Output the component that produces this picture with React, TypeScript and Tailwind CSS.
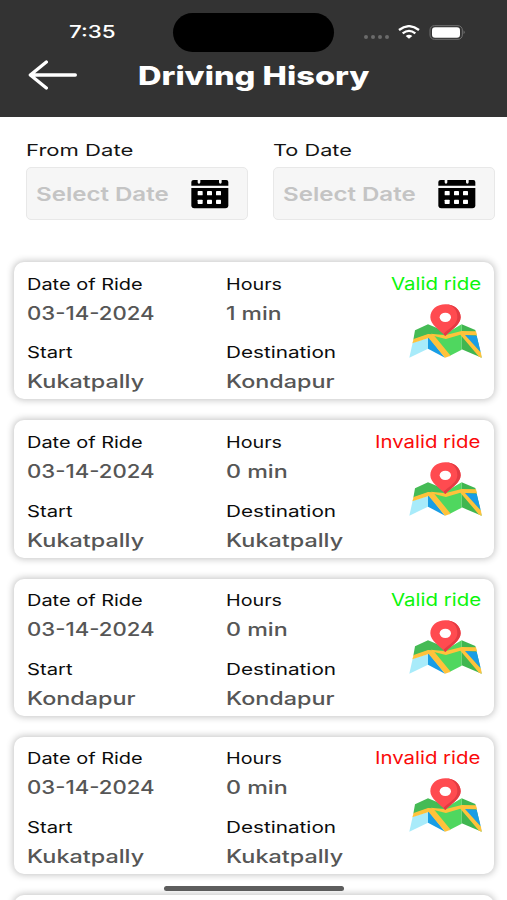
import { useLayoutEffect, useRef, useState } from "react";

type FitProps = { text: string; width: number; className?: string };

/** One line of wide lettering, stretched horizontally to the given width. */
function Fit({ text, width, className = "" }: FitProps) {
  const ref = useRef<HTMLSpanElement>(null);
  const [scale, setScale] = useState(1);
  useLayoutEffect(() => {
    if (ref.current) setScale(width / ref.current.offsetWidth);
  }, [text, width]);
  return (
    <div className={className} style={{ width }}>
      <span
        ref={ref}
        className="inline-block origin-left whitespace-nowrap"
        style={{ transform: `scaleX(${scale})` }}
      >
        {text}
      </span>
    </div>
  );
}

const widths: Record<string, number> = {
  "03-14-2024": 128,
  "1 min": 56,
  "0 min": 62,
  Kukatpally: 117,
  Kondapur: 109,
};

function CalendarIcon() {
  return (
    <svg className="h-[30px] w-[38px]" viewBox="0 0 114 90" preserveAspectRatio="none">
      <path d="M1 20V9Q1 3 8 3H20V10Q20 14 24 14T28 10V3H84V10Q84 14 88 14T92 10V3H106Q112 3 112 9V20Z" />
      <path d="M1 27H112V79Q112 88 103 88H10Q1 88 1 79Z" />
      <g fill="#fff">
        <rect x="20" y="36" width="15" height="13" rx="2" />
        <rect x="48" y="36" width="15" height="13" rx="2" />
        <rect x="75" y="36" width="15" height="13" rx="2" />
        <rect x="20" y="62" width="15" height="13" rx="2" />
        <rect x="48" y="62" width="15" height="13" rx="2" />
        <rect x="75" y="62" width="15" height="13" rx="2" />
      </g>
    </svg>
  );
}

function MapIcon() {
  return (
    <svg className="h-[54px] w-[73px]" viewBox="26 26 219 162" preserveAspectRatio="none">
      <path d="M44 105L83 87L134 108V125L83 118L39 133Z" fill="#45bb55" />
      <path d="M37 142L83 128V160L27 187Z" fill="#a8ebfa" />
      <path d="M83 122L134 187L83 160Z" fill="#199de5" />
      <path d="M95 118L134 116L184 87V163L146 183Z" fill="#4fd75f" />
      <path d="M184 87L225 104L244 187L184 162Z" fill="#40b650" />
      <path d="M190 118L229 121L241 170Z" fill="#199de5" />
      <path d="M40 131L83 116L98 117L151 181L134 187L85 128L36 144Z" fill="#ffc23b" />
      <path d="M92 115L134 120L184 107L227 108L230 120L194 119L242 172L244 187L236 184L180 118L137 131L98 121Z" fill="#ffc23b" />
      <path d="M135 27C110 27 90 43 90 66C90 88 119 105 135 122C151 105 181 88 181 66C181 43 160 27 135 27Z" fill="#ff4b50" />
      <path d="M135 27C160 27 181 43 181 66C181 88 151 105 135 122L129 116C148 98 171 88 171 66C171 43 158 29 135 27Z" fill="#e43b43" />
      <ellipse cx="135" cy="66" rx="17" ry="14" fill="#fff" />
    </svg>
  );
}

function DateField({ label, labelWidth }: { label: string; labelWidth: number }) {
  return (
    <div className="w-[222px]">
      <Fit text={label} width={labelWidth} className="h-6 text-[16.5px] leading-6 text-[#141414]" />
      <div className="mt-[5px] flex h-[53px] items-center justify-between rounded-[5px] border border-[#e8e8e8] bg-[#f6f6f6] pr-[18.5px] pl-[9px]">
        <Fit
          text="Select Date"
          width={133}
          className="mt-[2px] h-7 text-[19px] leading-7 font-semibold text-[#c4c4c4]"
        />
        <CalendarIcon />
      </div>
    </div>
  );
}

function Entry({ label, labelWidth, value }: { label: string; labelWidth: number; value: string }) {
  return (
    <div>
      <Fit text={label} width={labelWidth} className="h-6 text-[16px] leading-6 text-[#0c0c0c]" />
      <Fit
        text={value}
        width={widths[value]}
        className="mt-[4px] h-7 text-[18px] leading-7 font-medium text-[#565656]"
      />
    </div>
  );
}

type Ride = { hours: string; start: string; destination: string; valid: boolean };

const cardShape = "shrink-0 rounded-[10px] bg-white shadow-[0_0_7px_1px_rgba(0,0,0,0.24)]";

function RideCard({ hours, start, destination, valid }: Ride) {
  return (
    <article className={`${cardShape} flex h-[137.33px] pt-[9.5px] pr-[13px] pl-[13px]`}>
      <div className="flex w-[199.5px] flex-col gap-[12.7px]">
        <Entry label="Date of Ride" labelWidth={116} value="03-14-2024" />
        <Entry label="Start" labelWidth={45.5} value={start} />
      </div>
      <div className="flex flex-col gap-[12.7px]">
        <Entry label="Hours" labelWidth={55.5} value={hours} />
        <Entry label="Destination" labelWidth={110} value={destination} />
      </div>
      <div className="ml-auto flex w-0 flex-col items-end">
        <Fit
          text={valid ? "Valid ride" : "Invalid ride"}
          width={valid ? 90 : 106}
          className={
            valid
              ? "h-6 text-[17.5px] leading-6 text-[#0bf50b]"
              : "h-6 text-[17.5px] leading-6 text-[#fa0a0a]"
          }
        />
        <div className="mt-[8px] -mr-[0.7px]">
          <MapIcon />
        </div>
      </div>
    </article>
  );
}

const rides: Ride[] = [
  { hours: "1 min", start: "Kukatpally", destination: "Kondapur", valid: true },
  { hours: "0 min", start: "Kukatpally", destination: "Kukatpally", valid: false },
  { hours: "0 min", start: "Kondapur", destination: "Kondapur", valid: true },
  { hours: "0 min", start: "Kukatpally", destination: "Kukatpally", valid: false },
];

export default function App() {
  return (
    <div className="relative h-[900px] w-[507px] overflow-hidden bg-white font-['Inter','Liberation_Sans',sans-serif]">
      <header className="h-[117px] bg-[#333333]">
        <div className="flex h-[52px] items-end pl-[68.5px]">
          <Fit text="7:35" width={46} className="mb-[8px] h-6 text-[17px] leading-6 font-medium text-white" />
          <div className="ml-[58.5px] h-[39px] w-[161px] rounded-full bg-black" />
          <div className="mb-[12px] ml-[30px] flex h-[16px] items-center">
            <div className="mt-[9px] flex gap-[3px]">
              <i className="size-[4px] rounded-full bg-[#6b6b6b]" />
              <i className="size-[4px] rounded-full bg-[#6b6b6b]" />
              <i className="size-[4px] rounded-full bg-[#6b6b6b]" />
              <i className="size-[4px] rounded-full bg-[#6b6b6b]" />
            </div>
            <svg className="ml-[9px] h-[14px] w-[22px]" viewBox="0 0 66 42" fill="none" stroke="#fff" strokeWidth="7">
              <path d="M3 15Q33 -8 63 15" />
              <path d="M14 25Q33 10 52 25" />
              <path d="M23 33Q33 25 43 33L33 41Z" fill="#fff" stroke="none" />
            </svg>
            <svg className="ml-[9px] h-[15px] w-[36px]" viewBox="0 0 108 45">
              <rect x="3" y="2" width="97" height="41" rx="13" fill="none" stroke="#707070" strokeWidth="3" />
              <rect x="9" y="7" width="84" height="31" rx="9" fill="#fff" />
              <path d="M104 16Q109 22 104 28Z" fill="#888" />
            </svg>
          </div>
        </div>
        <div className="flex h-[46px] items-center pl-[28px]">
          <svg
            className="h-[30px] w-[49px]"
            viewBox="0 0 147 90"
            fill="none"
            stroke="#fff"
            strokeWidth="10"
            strokeLinecap="round"
            strokeLinejoin="round"
          >
            <path d="M55 6L7 45L55 84M7 45H142" />
          </svg>
          <Fit text="Driving Hisory" width={232} className="mt-[2px] ml-[60.5px] h-9 text-[26px] leading-9 font-extrabold text-white" />
        </div>
      </header>

      <section className="flex gap-[25px] pt-[21px] pl-[26px]">
        <DateField label="From Date" labelWidth={107} />
        <DateField label="To Date" labelWidth={79} />
      </section>

      <main className="mt-[42px] flex flex-col gap-[21px] pr-[13px] pl-[13.5px]">
        {rides.map((ride, i) => (
          <RideCard key={i} {...ride} />
        ))}
        <article className={`${cardShape} h-[137.33px]`} />
      </main>

      <div className="absolute top-[886px] left-[164px] h-[5px] w-[180px] rounded-full bg-[#5d5d5d]" />
    </div>
  );
}
